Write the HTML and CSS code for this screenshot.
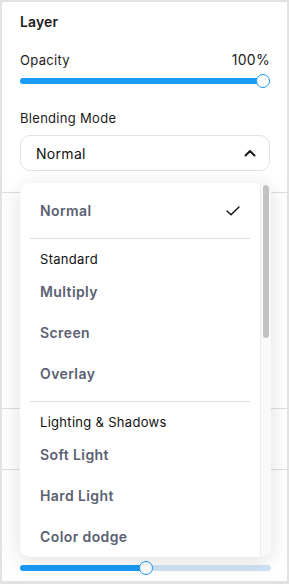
FILE: index.html
```html
<!DOCTYPE html>
<html>

<head>
	<meta charset="utf-8">
	<link rel="stylesheet" href="styles.css">
</head>

<body>
	<div class="panel">
		<h3 class="title">Layer</h3>

		<div class="row">
			<span>Opacity</span>
			<span class="value">100%</span>
		</div>
		<div class="slider" style="--value: 1">
			<div class="fill"></div>
			<div class="knob"></div>
		</div>

		<div class="label">Blending Mode</div>
		<div class="select">
			<span>Normal</span>
			<svg class="chevron" width="12" height="8" viewBox="0 0 12 8">
				<path d="M1.5 6.5 L6 2 L10.5 6.5" fill="none" stroke="#1c1c1c" stroke-width="2" stroke-linecap="round" stroke-linejoin="round" />
			</svg>
		</div>

		<div class="section section-tall"></div>
		<div class="section section-short"></div>
		<div class="section section-last">
			<div class="slider wide" style="--value: 0.5">
				<div class="fill"></div>
				<div class="knob"></div>
			</div>
		</div>

		<!-- open blending mode menu -->
		<div class="menu">
			<div class="menu-list">
				<div class="option selected">
					<span>Normal</span>
					<svg width="14" height="10" viewBox="0 0 14 10">
						<path d="M1 5 L5 8.8 L13 1" fill="none" stroke="#111" stroke-width="1.4" stroke-linecap="round" stroke-linejoin="round" />
					</svg>
				</div>
				<div class="divider"></div>
				<div class="group">Standard</div>
				<div class="option">Multiply</div>
				<div class="option">Screen</div>
				<div class="option">Overlay</div>
				<div class="divider"></div>
				<div class="group">Lighting &amp; Shadows</div>
				<div class="option">Soft Light</div>
				<div class="option">Hard Light</div>
				<div class="option">Color dodge</div>
			</div>
			<div class="scrollbar">
				<div class="thumb"></div>
			</div>
		</div>
	</div>
</body>

</html>
```

FILE: styles.css
```css
* {
	box-sizing: border-box;
}

body {
	margin: 0;
	background: #fff;
	font-family: Inter, "Noto Sans", sans-serif;
	letter-spacing: 0.3px;
	color: #1c1c1c;
}

.panel {
	position: relative;
	height: 584px;
	padding: 10px 17px 0 18px;
	border: 2px solid #e2e2e2;
	border-bottom-width: 3px;
	background: #fff;
	overflow: hidden;
}

.title {
	margin: 0;
	font-size: 14px;
	line-height: 20px;
	font-weight: 600;
	letter-spacing: 0.1px;
}

.row {
	display: flex;
	justify-content: space-between;
	margin-top: 18px;
	font-size: 13px;
	line-height: 20px;
}

.row .value {
	font-size: 14px;
}

/* sliders */
.slider {
	position: relative;
	height: 14px;
	margin-top: 4px;
}

.slider::before {
	content: "";
	position: absolute;
	left: 0;
	right: 0;
	top: 4px;
	height: 6px;
	border-radius: 3px;
	background: #cfe4f6;
}

.slider .fill {
	position: absolute;
	left: 0;
	top: 4px;
	height: 6px;
	width: calc((100% - 14px) * var(--value) + 7px);
	border-radius: 3px;
	background: #189cf6;
}

.slider .knob {
	position: absolute;
	top: 0;
	left: calc((100% - 14px) * var(--value));
	width: 14px;
	height: 14px;
	border-radius: 50%;
	background: #fff;
	border: 1.5px solid #189cf6;
}

.slider.wide {
	margin-right: -1px;
}

.label {
	margin-top: 20px;
	font-size: 13px;
	line-height: 20px;
}

.select {
	display: flex;
	align-items: center;
	justify-content: space-between;
	height: 36px;
	margin-top: 7px;
	padding: 0 13px 0 15px;
	border: 1px solid #dfe1e8;
	border-radius: 10px;
	font-size: 14px;
	color: #111;
}

/* sections hidden behind the menu */
.section {
	margin: 0 -17px 0 -18px;
	padding: 0 17px 0 18px;
	border-top: 1px solid #dcdde6;
}

.section-tall {
	margin-top: 21px;
	height: 216px;
}

.section-short {
	height: 61px;
}

.section-last {
	padding-top: 87px;
}

/* dropdown */
.menu {
	position: absolute;
	left: 18px;
	top: 181px;
	width: 251px;
	height: 374px;
	display: flex;
	background: #fff;
	border-radius: 10px;
	box-shadow: 0 4px 22px rgba(0, 0, 0, 0.13);
	overflow: hidden;
}

.menu-list {
	flex: 1;
	padding: 7px 10px;
}

.option {
	display: flex;
	align-items: center;
	justify-content: space-between;
	height: 41px;
	padding: 0 10px;
	font-size: 14px;
	font-weight: 600;
	letter-spacing: 0.4px;
	color: #5a6172;
}

.divider {
	height: 1px;
	margin-top: 7px;
	background: #dcdce6;
}

.group {
	padding: 10px 10px 2px;
	font-size: 13px;
	line-height: 20px;
	color: #111;
}

.scrollbar {
	width: 11px;
	border-left: 1px solid #ebebeb;
	background: #f9f9f9;
	padding: 2px 0 0 2px;
}

.thumb {
	width: 6px;
	height: 153px;
	border-radius: 3px;
	background: #c2c2c2;
}
```
